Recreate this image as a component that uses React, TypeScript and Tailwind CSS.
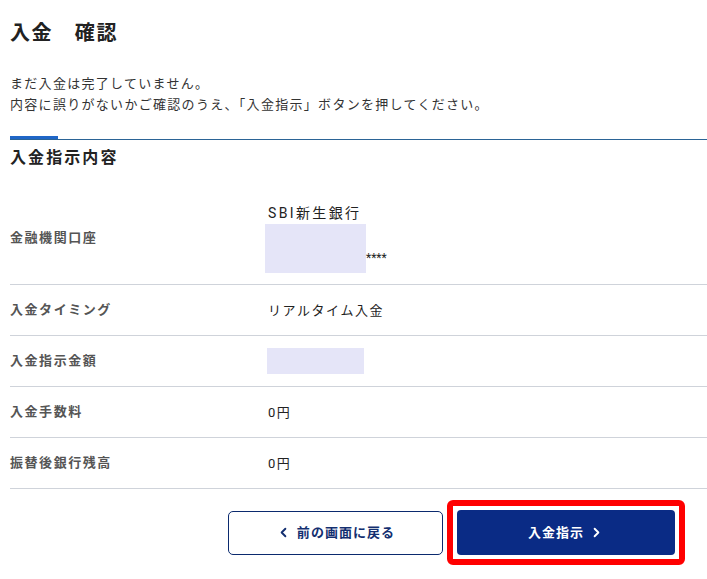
import { ChevronLeft, ChevronRight } from "lucide-react";

const rows: { label: string; value: string }[] = [
  { label: "入金タイミング", value: "リアルタイム入金" },
  { label: "入金指示金額", value: "" },
  { label: "入金手数料", value: "0円" },
  { label: "振替後銀行残高", value: "0円" },
];

export default function App() {
  return (
    <div
      className="min-h-screen bg-white pl-[10px] text-[#222]"
      style={{ fontFamily: 'Roboto, "Noto Sans CJK JP", sans-serif' }}
    >
      {/* Title */}
      <h1 className="pt-[19px] text-[20px] font-bold leading-[28px] tracking-[0.08em] text-[#222]">
        入金　確認
      </h1>

      {/* Notice */}
      <div className="mt-[26px] text-[13px] leading-[21px] tracking-[0.1em] text-[#333]">
        <p>まだ入金は完了していません。</p>
        <p>内容に誤りがないかご確認のうえ、「入金指示」ボタンを押してください。</p>
      </div>

      {/* Section divider */}
      <div className="mt-[21px] border-b border-[#2b6496]">
        <div className="h-[3px] w-[48px] bg-[#1f66c7]" />
      </div>

      <h2 className="mt-[6px] text-[16px] font-bold leading-[24px] tracking-[0.13em] text-[#222]">
        入金指示内容
      </h2>

      {/* Detail rows */}
      <div className="mt-[15px]">
        <div className="flex items-center border-b border-[#cfd3da] pt-[18px] pb-[11px]">
          <div className="w-[256px] text-[13px] font-bold tracking-[0.12em] text-[#555]">
            金融機関口座
          </div>
          <div className="text-[13px] leading-[21px] tracking-[0.12em] text-[#222]">
            <div className="pl-[2px] text-[14px] tracking-[0.17em]">SBI新生銀行</div>
            <div className="flex items-end">
              <div className="ml-[-1px] h-[49px] w-[101px] bg-[#e5e5f8]" />
              <span className="mb-[4px] text-[12px] tracking-normal">****</span>
            </div>
          </div>
        </div>

        {rows.map((row) => (
          <div
            key={row.label}
            className="flex h-[51px] items-center border-b border-[#cfd3da]"
          >
            <div className="w-[256px] text-[13px] font-bold tracking-[0.12em] text-[#555]">
              {row.label}
            </div>
            {row.value ? (
              <div className="pl-[2px] text-[13px] leading-[21px] tracking-[0.12em] text-[#222]">
                {row.value}
              </div>
            ) : (
              <div className="ml-[1px] h-[26px] w-[97px] bg-[#e5e5f8]" />
            )}
          </div>
        ))}
      </div>

      {/* Actions */}
      <div className="mt-[11px] flex items-center justify-end gap-[4px] pr-[22px]">
        <button className="flex h-[44px] w-[215px] items-center justify-center gap-[6px] rounded-[5px] border border-[#0b2a6e] bg-white text-[13px] font-bold tracking-[0.08em] text-[#132f70]">
          <ChevronLeft size={15} strokeWidth={3} />
          前の画面に戻る
        </button>
        <div className="rounded-[6px] border-[6px] border-[#ff0000] bg-white p-[4px]">
          <button className="flex h-[45px] w-[218px] items-center justify-center gap-[5px] rounded-[4px] bg-[#0a2b85] text-[13px] font-bold tracking-[0.08em] text-white">
            入金指示
            <ChevronRight size={15} strokeWidth={3} />
          </button>
        </div>
      </div>
    </div>
  );
}
